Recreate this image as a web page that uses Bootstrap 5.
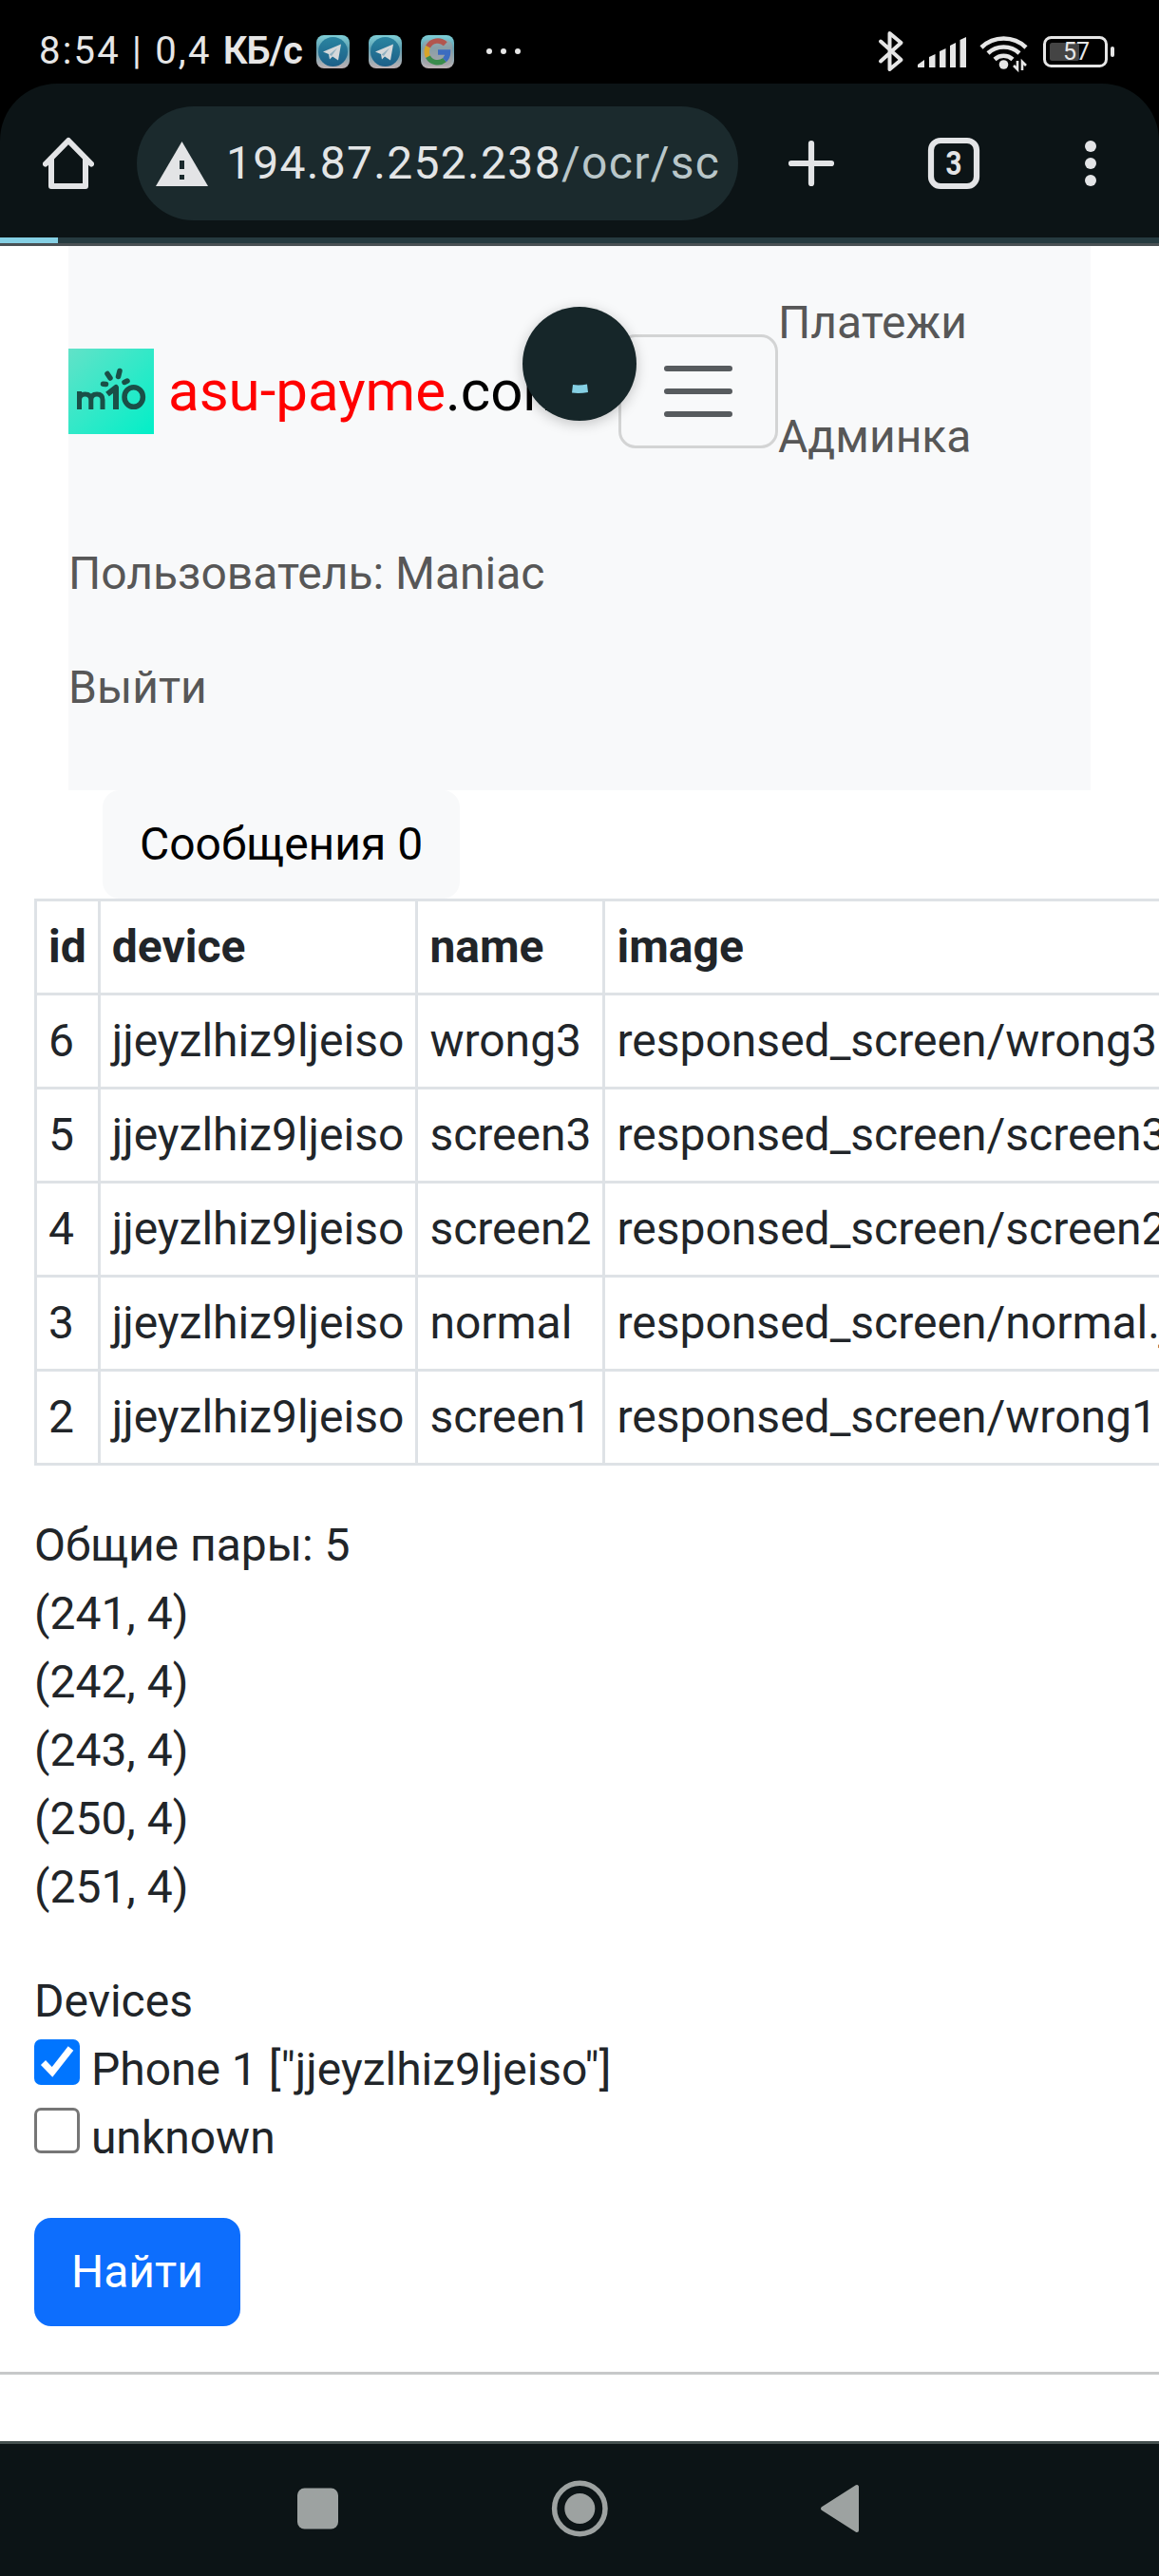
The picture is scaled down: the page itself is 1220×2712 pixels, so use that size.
<!DOCTYPE html>
<html lang="ru">
<head>
<meta charset="utf-8">
<title>asu-payme.com</title>
<meta name="viewport" content="width=device-width, initial-scale=1">
<link href="https://cdn.jsdelivr.net/npm/bootstrap@5.3.0/dist/css/bootstrap.min.css" rel="stylesheet">
<style>
  /* 1rem = 48px: the page is laid out for a triple-density phone */
  html { font-size: 48px; }
  body { font-family: Roboto, "Noto Sans", sans-serif; width: 1220px; height: 2712px; overflow: hidden; --bs-border-width: 3px; }
  svg { display: block; flex: none; }
  .os-status { height: 88px; background: #000; color: #e6e6e6; padding: 0 46px 0 41px; }
  .os-clock { font-size: 40px; font-weight: 400; letter-spacing: 2.2px; line-height: 60px; white-space: pre; padding-top: 20px; width: 283px; }
  .os-clock b { font-weight: 600; letter-spacing: -.9px; }
  .chrome-wrap { background: #000; height: 162px; }
  .chrome-bar { background: #0c1416; height: 162px; border-radius: 60px 60px 0 0; padding: 24px 0 0 45px; }
  .omnibox { background: #1b2a2d; width: 633px; height: 120px; border-radius: 60px; margin-left: 45px; padding-left: 20px; }
  .omni-url { font-size: 48px; font-weight: 400; color: #e3e5e6; letter-spacing: 1.3px; margin-left: 19px; white-space: nowrap; }
  .omni-url span { color: #b9c6c9; }
  .load-track { height: 6px; background: #263b40; }
  .load-fill { width: 61px; height: 6px; background: #85d0e4; }
  .page-view { height: 2314px; overflow: hidden; }
  .page-view::before { content: ""; position: absolute; left: 0; top: 256px; width: 1220px; height: 3px; background: #4a5154; z-index: 2; }
  .site-nav { margin: 0 72px; padding: .5rem 0; background: #f8f9fa; }
  .site-row { height: 264px; }
  .site-brand { font-size: 60px; line-height: 90px; padding: 15px 0; margin-right: 48px; color: #000; white-space: nowrap; gap: 15px; }
  .site-brand em { font-style: normal; color: #f00; }
  .site-links { margin-bottom: .5rem; }
  .site-links .nav-link { color: #575757; padding: .5rem 0; }
  .msg-row { padding-left: 108px; }
  .data-grid { margin: 0 0 1rem 36px; width: max-content; white-space: nowrap; }
  .data-grid td, .data-grid th { border-width: 3px; }
  .find-form { padding-left: .75rem; }
  .tick { appearance: none; width: 48px; height: 48px; margin: 0; border: 3px solid #767676; border-radius: 7px; background: #fff; vertical-align: baseline; }
  .tick:checked { border: 0; background: #0075ff url("data:image/svg+xml,%3Csvg xmlns='http://www.w3.org/2000/svg' viewBox='0 0 48 48'%3E%3Cpath d='M9.500 24.500L19 34.500L38.500 9.500' fill='none' stroke='%23fff' stroke-width='7'/%3E%3C/svg%3E"); }
  .btn { --bs-btn-border-width: 3px; }
  .rule { border-top: 3px solid #212529; opacity: .25; margin: 1rem 0; }
  .spinner-disc { position: absolute; left: 550px; top: 323px; width: 120px; height: 120px; border-radius: 50%; background: #162629; box-shadow: 0 3px 14px rgba(0,0,0,.22); z-index: 3; }
  .os-nav { height: 142px; background: #0c1416; border-top: 3px solid #45504f; }
</style>
</head>
<body>
<header>
  <div class="os-status d-flex align-items-center">
    <div class="os-clock">8:54 | 0,4 <b>КБ/с</b></div>
    <svg width="850" height="88" viewBox="324 0 850 88">
      <defs>
        <linearGradient id="tile" x1="0" y1="0" x2="0" y2="1"><stop offset="0" stop-color="#7fd0d8"/><stop offset=".4" stop-color="#5f9fb0"/><stop offset="1" stop-color="#bfb2b4"/></linearGradient>
        <linearGradient id="disc" x1="0" y1="0" x2="0" y2="1"><stop offset="0" stop-color="#2a84a0"/><stop offset="1" stop-color="#1c5f88"/></linearGradient>
        <g id="tg"><rect width="35" height="35" rx="8" fill="url(#tile)"/><circle cx="17.500" cy="17.500" r="15.500" fill="url(#disc)"/><path d="M7 17.500L26 9.500L23 26.500L17 22.500L14 25.500L13 20Z" fill="#d5d8da"/><path d="M13.500 20.500L22 13.500L16 22" fill="#8fb0c0"/></g>
      </defs>
      <use href="#tg" x="333" y="37"/><use href="#tg" x="388" y="37"/>
      <g transform="translate(443 37)"><rect width="35" height="35" rx="8" fill="url(#tile)"/><rect x="1.500" y="5" width="32" height="27" rx="8" fill="#a39fa2" opacity=".6"/>
        <g fill="none" stroke-width="5.500"><path d="M25.800 9.200A11.500 11.500 0 0 0 7.500 12.300" stroke="#b2554e"/><path d="M7.500 12.300A11.500 11.500 0 0 0 7.500 22.700" stroke="#d6a52a"/><path d="M7.500 22.700A11.500 11.500 0 0 0 25 26.200" stroke="#3a8b4c"/><path d="M25 26.200A11.500 11.500 0 0 0 28.500 18H18" stroke="#3c6cc0"/></g></g>
      <g fill="#e6e6e6"><circle cx="515" cy="54" r="3"/><circle cx="530" cy="54" r="3"/><circle cx="545" cy="54" r="3"/></g>
      <path d="M927 43.500L948.500 63L936.500 73V35L948.500 45L927 64.500" fill="none" stroke="#e6e6e6" stroke-width="4" stroke-linejoin="round" stroke-linecap="round"/>
      <g fill="#e6e6e6"><path d="M966 71V68L973 63V71Z"/><path d="M978 71V60L984.500 57V71Z"/><path d="M989 71V54L995.500 51V71Z"/><path d="M1000 71V48L1006 45V71Z"/><path d="M1010.500 71V42L1017 39V71Z"/></g>
      <g fill="none" stroke="#e6e6e6" stroke-width="4.500"><path d="M1033 50A34 34 0 0 1 1080 50"/><path d="M1040 56A24 24 0 0 1 1073 56"/><path d="M1047 62.500A14 14 0 0 1 1066 62.500"/></g>
      <circle cx="1056.500" cy="68" r="4.800" fill="#e6e6e6"/>
      <path d="M1067 69L1071 73V64M1076 74V65L1080 69" fill="none" stroke="#e6e6e6" stroke-width="2.600"/>
      <rect x="1099.500" y="39.500" width="65" height="30" rx="7" fill="none" stroke="#e6e6e6" stroke-width="3"/>
      <rect x="1105" y="45" width="31" height="19" rx="2.500" fill="#444"/>
      <rect x="1169" y="49" width="4" height="11" rx="2" fill="#e6e6e6"/>
      <text x="1133" y="63" font-family="Roboto" font-size="25" fill="#e6e6e6" text-anchor="middle">57</text>
    </svg>
  </div>
  <div class="chrome-wrap">
    <div class="chrome-bar d-flex">
      <svg width="54" height="120" viewBox="45 112 54 120"><path d="M48 172.500L72 148L96 172.500M54 167V196H90V167" fill="none" stroke="#e3e4e6" stroke-width="6" stroke-linejoin="round" stroke-linecap="round"/></svg>
      <div class="omnibox d-flex align-items-center">
        <svg width="55" height="47" viewBox="0 0 55 47"><path d="M27.500 0L55 47H0Z" fill="#e3e4e6"/><path d="M25 20h5v9h-5zM25 35h5v5h-5z" fill="#1b2a2d"/></svg>
        <div class="omni-url">194.87.252.238<span>/ocr/sc</span></div>
      </div>
      <svg width="443" height="120" viewBox="777 112 443 120">
        <path d="M854 151V193M833 172H875" stroke="#e3e4e6" stroke-width="6.200" stroke-linecap="round"/>
        <rect x="980" y="148" width="48" height="48" rx="10" fill="none" stroke="#e3e4e6" stroke-width="6.200"/>
        <text x="1004" y="184" font-family="Roboto" font-weight="700" font-size="35" textLength="17" lengthAdjust="spacingAndGlyphs" fill="#e3e4e6" text-anchor="middle">3</text>
        <g fill="#e3e4e6"><circle cx="1148" cy="154" r="6"/><circle cx="1148" cy="172" r="6"/><circle cx="1148" cy="190" r="6"/></g>
      </svg>
    </div>
  </div>
  <div class="load-track"><div class="load-fill"></div></div>
</header>

<main class="page-view">
  <nav class="site-nav navbar d-block">
    <div class="site-row d-flex align-items-center">
      <a class="navbar-brand site-brand d-flex align-items-center" href="#"><svg width="90" height="90" viewBox="0 0 90 90">
        <defs><linearGradient id="mint" x1="0" y1="0" x2="1" y2="1"><stop offset="0" stop-color="#62e2c8"/><stop offset="1" stop-color="#02efc8"/></linearGradient></defs>
        <rect width="90" height="90" fill="url(#mint)"/>
        <g fill="none" stroke="#1a4f47" stroke-width="5">
          <path d="M11.500 64V45M11.500 54Q11.500 48 17.500 48Q23.800 48 23.800 54V64M23.800 54Q23.800 48 30 48Q36 48 36 54V64"/>
          <path d="M41 48L50 41V64" stroke-width="6" stroke-linejoin="round"/>
          <ellipse cx="68.700" cy="51" rx="9.700" ry="10.300" stroke-width="5.500"/>
          <path d="M36.500 37.200L39.500 37.600M41 26.500L44 31M54 23.500L52.500 29.500M59 35.500L62 34" stroke-width="5.500" stroke-linecap="round"/>
        </g></svg>
        <span><em>asu-payme</em>.com</span></a>
      <button class="navbar-toggler" type="button" aria-label="Меню"><span class="navbar-toggler-icon"></span></button>
      <ul class="nav flex-column site-links">
        <li><a class="nav-link" href="#">Платежи</a></li>
        <li><a class="nav-link" href="#">Админка</a></li>
      </ul>
    </div>
    <ul class="nav flex-column site-links">
      <li><a class="nav-link" href="#">Пользователь: Maniac</a></li>
      <li><a class="nav-link" href="#">Выйти</a></li>
    </ul>
  </nav>
  <div class="d-flex msg-row"><button class="btn btn-light" type="button">Сообщения 0</button></div>

  <table class="table table-sm table-bordered data-grid">
    <thead><tr><th>id</th><th>device</th><th>name</th><th>image</th></tr></thead>
    <tbody>
      <tr><td>6</td><td>jjeyzlhiz9ljeiso</td><td>wrong3</td><td>responsed_screen/wrong3.jpg</td></tr>
      <tr><td>5</td><td>jjeyzlhiz9ljeiso</td><td>screen3</td><td>responsed_screen/screen3.jpg</td></tr>
      <tr><td>4</td><td>jjeyzlhiz9ljeiso</td><td>screen2</td><td>responsed_screen/screen2.jpg</td></tr>
      <tr><td>3</td><td>jjeyzlhiz9ljeiso</td><td>normal</td><td>responsed_screen/normal.jpg</td></tr>
      <tr><td>2</td><td>jjeyzlhiz9ljeiso</td><td>screen1</td><td>responsed_screen/wrong1.jpg</td></tr>
    </tbody>
  </table>

  <form class="find-form">
    <p class="mb-3">Общие пары: 5<br>(241, 4)<br>(242, 4)<br>(243, 4)<br>(250, 4)<br>(251, 4)</p>
    <div class="mb-3">
      <div>Devices</div>
      <div><input class="tick" type="checkbox" checked> Phone 1 ["jjeyzlhiz9ljeiso"]</div>
      <div><input class="tick" type="checkbox"> unknown</div>
    </div>
    <button class="btn btn-primary d-block" type="button">Найти</button>
  </form>
  <hr class="rule">
</main>
<div class="spinner-disc"><svg width="120" height="120" viewBox="0 0 120 120"><path d="M53 82Q60 83 68 81.500L69 90Q60 91.500 52 90.500Z" fill="#85d0e4"/></svg></div>

<footer class="os-nav">
  <svg width="1220" height="139" viewBox="0 2573 1220 139">
    <g fill="#9da2a1">
      <rect x="313" y="2619.500" width="43" height="43" rx="7.500"/>
      <circle cx="610.300" cy="2641" r="16"/>
      <circle cx="610.300" cy="2641" r="26.700" fill="none" stroke="#9da2a1" stroke-width="5.500"/>
      <path d="M866 2641L902 2618V2664Z" stroke="#9da2a1" stroke-width="4" stroke-linejoin="round"/>
    </g>
  </svg>
</footer>
<script src="https://cdn.jsdelivr.net/npm/bootstrap@5.3.0/dist/js/bootstrap.bundle.min.js"></script>
</body>
</html>
